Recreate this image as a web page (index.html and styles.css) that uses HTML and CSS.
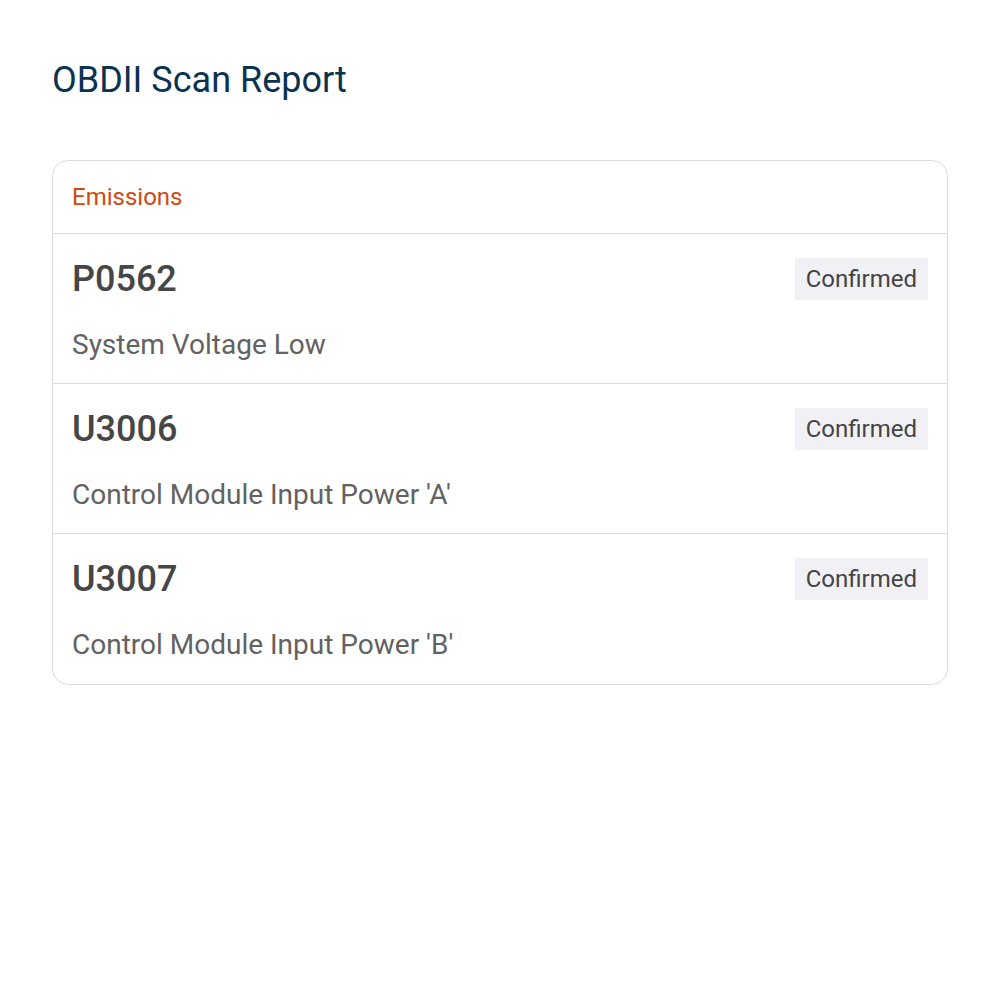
FILE: index.html
```html
<!DOCTYPE html>
<html>
<head>
<meta charset="utf-8">
<link rel="stylesheet" href="styles.css">
</head>
<body>
<main class="page">
  <h1 class="title">OBDII Scan Report</h1>
  <section class="card">
    <header class="card-header">Emissions</header>
    <div class="row">
      <div class="row-top">
        <span class="code">P0562</span>
        <span class="badge">Confirmed</span>
      </div>
      <div class="desc">System Voltage Low</div>
    </div>
    <div class="row">
      <div class="row-top">
        <span class="code">U3006</span>
        <span class="badge">Confirmed</span>
      </div>
      <div class="desc">Control Module Input Power 'A'</div>
    </div>
    <div class="row">
      <div class="row-top">
        <span class="code">U3007</span>
        <span class="badge">Confirmed</span>
      </div>
      <div class="desc">Control Module Input Power 'B'</div>
    </div>
  </section>
</main>
</body>
</html>
```

FILE: styles.css
```css
html, body {
  margin: 0;
  padding: 0;
  background: #ffffff;
  font-family: Roboto, "Noto Sans", sans-serif;
}

.page {
  padding: 52px 52px;
}

.title {
  margin: 0 0 52px 0;
  font-size: 36px;
  line-height: 56px;
  font-weight: 400;
  color: #0b3350;
}

.card {
  border: 1px solid #dadada;
  border-radius: 16px;
  overflow: hidden;
}

.card-header {
  height: 72px;
  padding: 0 19px;
  display: flex;
  align-items: center;
  font-size: 24px;
  color: #d1490f;
  border-bottom: 1px solid #dadada;
}

.row {
  height: 150px;
  padding: 24px 19px 0 19px;
  box-sizing: border-box;
  border-bottom: 1px solid #dadada;
}

.row:last-child {
  border-bottom: none;
}

.row-top {
  display: flex;
  justify-content: space-between;
  align-items: center;
  height: 42px;
}

.code {
  font-size: 36px;
  font-weight: 500;
  color: #464646;
}

.badge {
  background: #f1f0f5;
  color: #444444;
  font-size: 24px;
  line-height: 42px;
  padding: 0 11px;
}

.desc {
  margin-top: 27px;
  font-size: 28px;
  line-height: 36px;
  color: #626262;
}
```
